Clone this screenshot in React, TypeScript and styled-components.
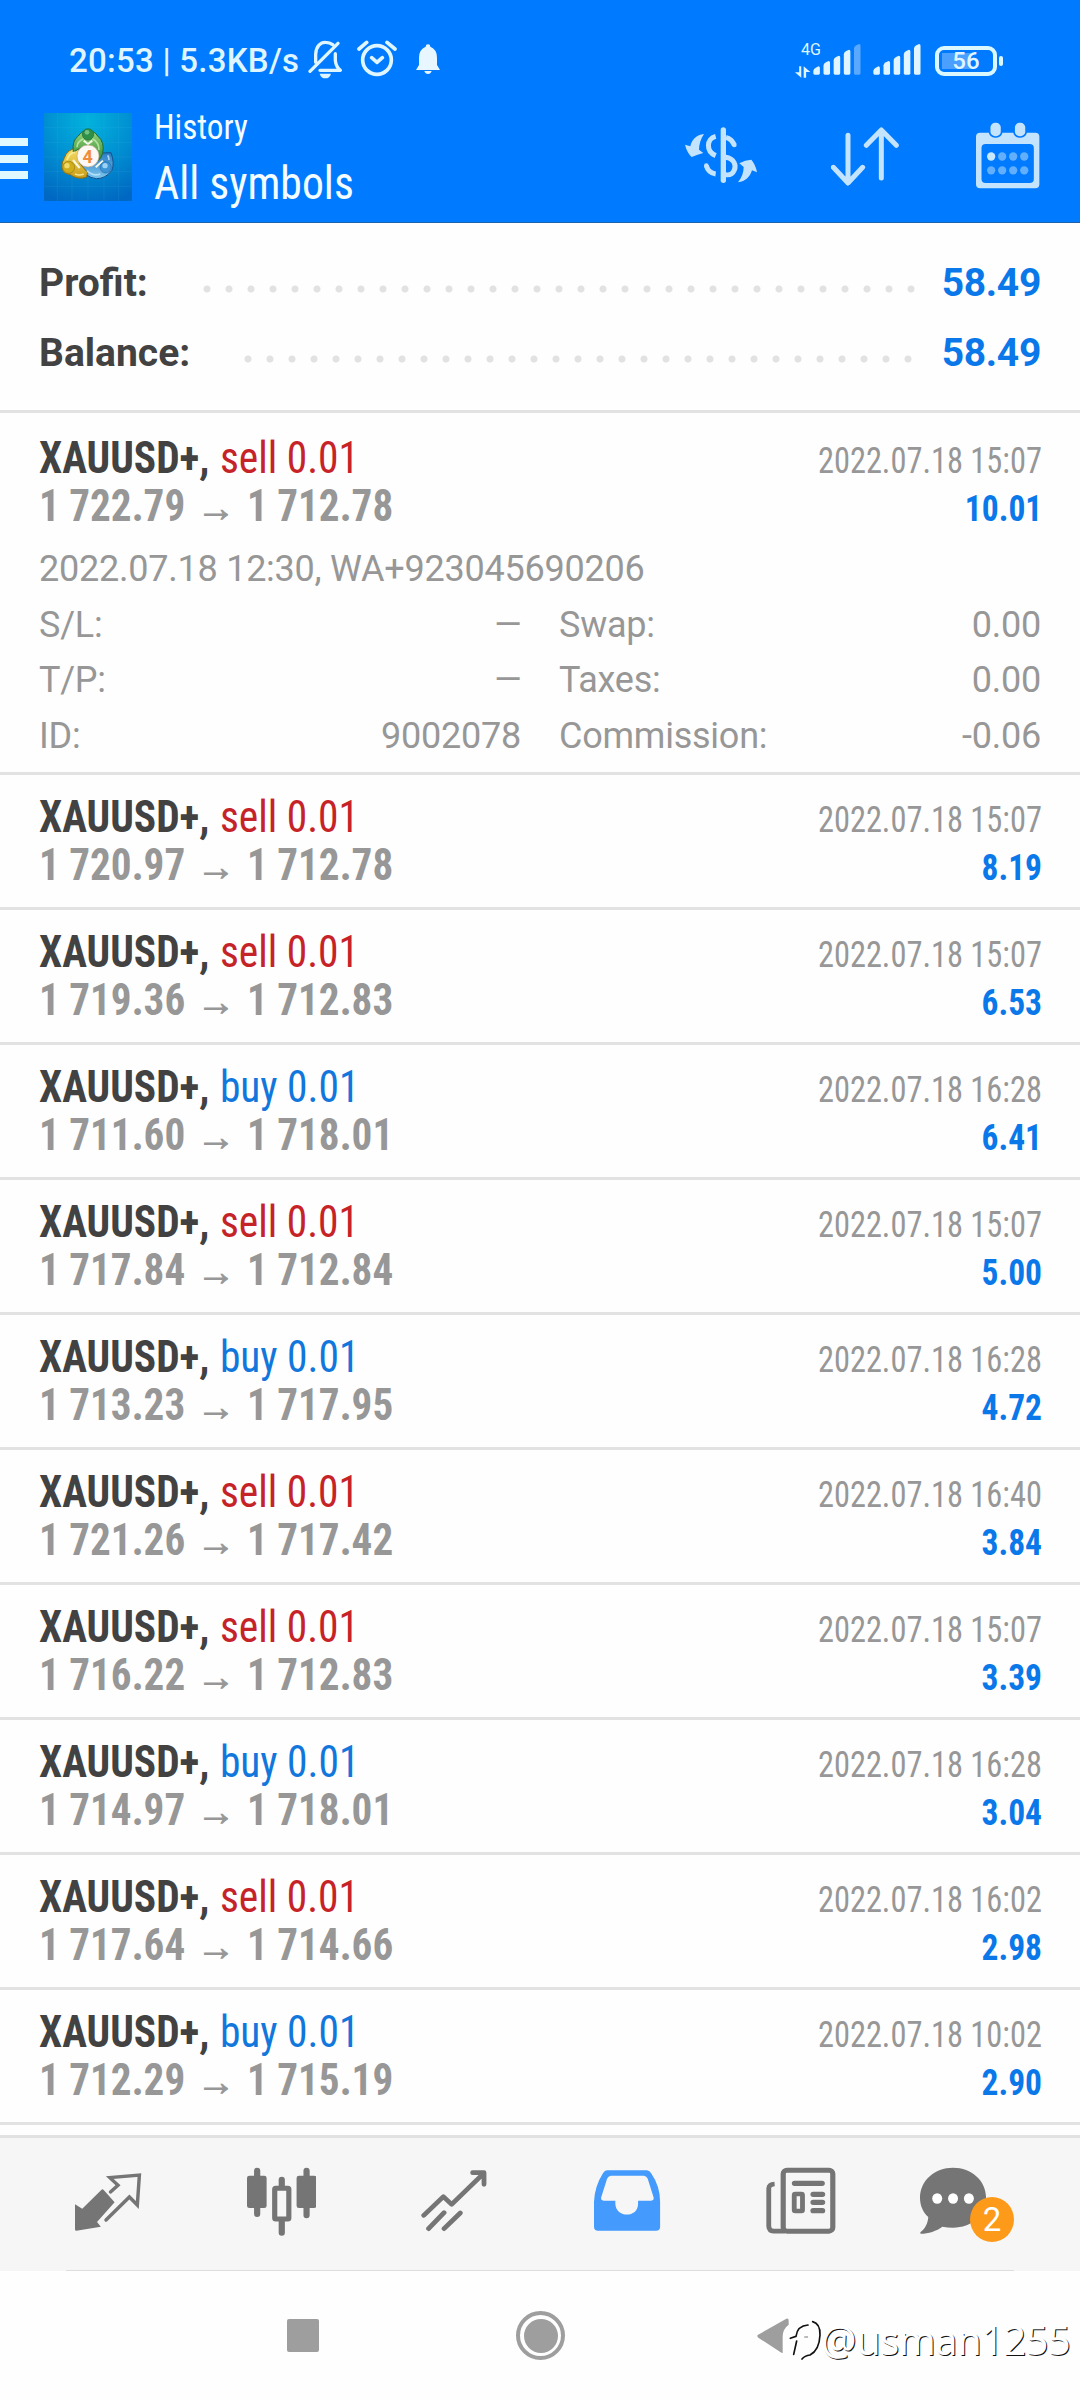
import React from "react";
import styled, { createGlobalStyle } from "styled-components";

const Global = createGlobalStyle`
  body { margin: 0; background: #fff; }
  * { box-sizing: border-box; }
`;

const ROBOTO = `Roboto, "Noto Sans", sans-serif`;
const CONDENSED = `"Roboto Condensed", Roboto, "Noto Sans", sans-serif`;
const SX = 2.904;
const SY = 3;

const Screen = styled.div`
  position: relative;
  width: 1080px;
  height: 2400px;
  overflow: hidden;
  display: flex;
  flex-direction: column;
  background: #fefefe;
  font-family: ${ROBOTO};
  white-space: nowrap;
`;

const Header = styled.header`
  height: 223px;
  background: #007bff;
  border-bottom: 1px solid #1c62ad;
  display: flex;
  flex-direction: column;
`;

const StatusBar = styled.div`
  height: 98px;
  padding: 23px 83px 0 69px;
  display: flex;
  align-items: center;
  color: #dff5ff;
`;

const Clock = styled.span`
  width: 239px;
  font-size: 33px;
  font-weight: 500;
  letter-spacing: 0.25px;
  line-height: 40px;
`;

const Spacer = styled.div`
  flex: 1;
`;

const Glyph = styled.svg<{ $gap?: number }>`
  display: block;
  flex: none;
  margin-left: ${(p) => p.$gap ?? 0}px;
`;

const DataType = styled.div`
  width: 18px;
  height: 34px;
  display: flex;
  flex-direction: column;
  justify-content: space-between;
  span {
    font-size: 16px;
    line-height: 12px;
    margin-left: 6px;
  }
`;

const Battery = styled.div`
  position: relative;
  width: 62px;
  height: 30px;
  margin-left: 14px;
  border: 4px solid #dcf8ff;
  border-radius: 9px;
  display: flex;
  align-items: center;
  justify-content: center;
  font-size: 24px;
  font-weight: 500;
  background: linear-gradient(#4a9fff, #4a9fff) 3px 3px / 29px 16px no-repeat;
  &::after {
    content: "";
    position: absolute;
    right: -10px;
    top: 6px;
    width: 4px;
    height: 10px;
    border-radius: 2px;
    background: #dcf8ff;
  }
`;

const TitleBar = styled.div`
  height: 124px;
  padding: 0 40px 6px 0;
  display: flex;
  align-items: center;
`;

const MenuButton = styled.div`
  width: 27.5px;
  height: 41px;
  margin-top: 3px;
  display: flex;
  flex-direction: column;
  justify-content: space-between;
  i {
    height: 8px;
    background: #e0f8ff;
  }
`;

const Titles = styled.div`
  margin: 6px 0 0 22px;
  display: flex;
  flex-direction: column;
  color: #f4fdff;
  font-family: ${CONDENSED};
`;

const Narrow = styled.span<{ $scale: number; $from?: "left" | "right" }>`
  display: inline-block;
  transform: scaleX(${(p) => p.$scale});
  transform-origin: ${(p) => p.$from ?? "left"} center;
`;

const Subtitle = styled(Narrow)`
  font-size: 35.5px;
  line-height: 46px;
`;

const Title = styled(Narrow)`
  font-size: 47px;
  line-height: 66px;
`;

const Summary = styled.section`
  height: 190px;
  padding: 25px 39px 0;
  border-bottom: 3px solid #e2e2e2;
`;

const SummaryRow = styled.div`
  height: 70px;
  display: flex;
  align-items: center;
  justify-content: space-between;
  font-size: 39px;
  line-height: 70px;
  font-weight: 700;
`;

const Label = styled.span`
  flex: 1;
  color: #424242;
`;

const Dots = styled.span<{ $n: number; $gap: number }>`
  width: ${(p) => p.$n * 22}px;
  margin: 12px ${(p) => p.$gap}px 0 0;
  height: 8px;
  background: radial-gradient(circle, #e2e2e2 3px, transparent 4px) 0 0 / 22px 8px repeat-x;
`;

const Amount = styled.span`
  width: 100px;
  text-align: right;
  letter-spacing: -0.3px;
  color: #0b78ea;
`;

const Order = styled.article<{ $open?: boolean }>`
  flex: none;
  padding: ${(p) => (p.$open ? "22px 38px 7px 39px" : "19px 38px 17px 39px")};
  height: ${(p) => (p.$open ? 362 : 135)}px;
  border-bottom: 3px solid #e2e2e2;
  font-family: ${CONDENSED};
`;

const Line = styled.div<{ $h: number }>`
  height: ${(p) => p.$h}px;
  display: flex;
  align-items: baseline;
  justify-content: space-between;
  line-height: 48px;
`;

const Instrument = styled(Narrow)`
  font-size: 43.5px;
  font-weight: 700;
  color: #424242;
`;

const Side = styled.span<{ $buy: boolean }>`
  font-weight: 400;
  margin-left: 1px;
  color: ${(p) => (p.$buy ? "#1277dc" : "#c62328")};
`;

const Prices = styled.span`
  display: flex;
  align-items: baseline;
  font-size: 44px;
  font-weight: 700;
  color: #979797;
`;

const Price = styled(Narrow)`
  width: 155px;
`;

const Arrow = styled.span`
  width: 53px;
  display: flex;
  justify-content: center;
  padding-right: 9px;
  font-family: "Liberation Sans", sans-serif;
  font-weight: 400;
  font-size: 39px;
  -webkit-text-stroke: 0.9px #979797;
`;

const Time = styled(Narrow)`
  font-size: 36px;
  color: #979797;
`;

const Profit = styled(Narrow)`
  font-size: 36px;
  font-weight: 700;
  color: #0b78ea;
`;

const Details = styled.div`
  margin-top: 12.4px;
  display: grid;
  grid-template-columns: 482px 482px;
  column-gap: 38px;
  font-family: ${ROBOTO};
  font-size: 36px;
  letter-spacing: -0.24px;
  line-height: 55.4px;
  color: #979797;
`;

const Wide = styled.div`
  grid-column: 1 / -1;
`;

const Field = styled.div`
  display: flex;
  justify-content: space-between;
`;

const Empty = styled(Narrow)`
  margin-right: -2px;
`;

const ListEnd = styled.div`
  height: 10px;
`;

const Tabs = styled.nav`
  height: 136px;
  flex: none;
  padding: 0 0 3px 75.4px;
  border-top: 3px solid #e2e2e2;
  background: #f6f6f6;
  display: flex;
  align-items: center;
`;

const Rule = styled.div`
  width: 948px;
  height: 1px;
  flex: none;
  margin: -1px 0 0 66px;
  background: #dedede;
`;

const Chat = styled.div`
  position: relative;
  margin-left: 84.3px;
`;

const Badge = styled.span`
  position: absolute;
  left: 50px;
  top: 34px;
  width: 44px;
  height: 45px;
  border-radius: 50%;
  background: #fe9a1a;
  color: #fff;
  font-size: 33px;
  line-height: 46px;
  text-align: center;
`;

const SystemBar = styled.footer`
  flex: 1;
  display: flex;
  align-items: center;
  padding-left: 286.5px;
`;

const Recent = styled.div`
  width: 32.5px;
  height: 32.5px;
  border-radius: 2px;
  background: #9e9e9e;
`;

const Home = styled.div`
  width: 49px;
  height: 49px;
  margin-left: 197px;
  border: 4px solid #9e9e9e;
  border-radius: 50%;
  background: #9e9e9e content-box;
  padding: 3.5px;
`;

const Watermark = styled.div`
  position: absolute;
  left: 788px;
  top: 2312px;
  display: flex;
  align-items: center;
  color: #fff;
  font-family: "Noto Sans", sans-serif;
  font-size: 39.5px;
  letter-spacing: -0.35px;
  line-height: 56px;
  text-shadow: 1px 1px 0.5px #111;
  span {
    margin-left: -3px;
  }
`;

const ICON = "#c4e3fd";

type PicProps = { x: number; y: number; w: number; h: number; sx?: number; gap?: number; children: React.ReactNode };

function Pic({ x, y, w, h, sx = SX, gap, children }: PicProps) {
  return (
    <Glyph $gap={gap} width={w / sx} height={h / SY} viewBox={`${x} ${y} ${w} ${h}`} preserveAspectRatio="none" fill="none">
      {children}
    </Glyph>
  );
}

function Bars({ x, faded, gap }: { x: number; faded?: boolean; gap: number }) {
  const tops = [200, 184, 168, 150, 133];
  return (
    <Pic x={x} y={100} w={140} h={163} gap={gap}>
      {tops.map((t, i) => {
        const l = x + 1 + i * 29.5;
        const dim = faded && i === 4;
        return (
          <path
            key={t}
            d={`M${l} 221V${t + 13}Q${l + 1} ${t + 7} ${l + 7} ${t + 4}L${l + 15} ${t}Q${l + 19} ${t} ${l + 19} ${t + 5}V221Q${l + 19} 225 ${l + 15} 225H${l + 4}Q${l} 225 ${l} 221Z`}
            fill={dim ? "#5aa8ff" : "#e0f5ff"}
          />
        );
      })}
    </Pic>
  );
}

function Logo() {
  return (
    <Glyph $gap={16.5} width="88" height="88" viewBox="43 39 264 264" fill="none">
      <defs>
        <radialGradient id="sky" cx="0.5" cy="0.1" r="0.95">
          <stop offset="0" stopColor="#02b2dd" />
          <stop offset="0.5" stopColor="#0090d2" />
          <stop offset="1" stopColor="#0068c2" />
        </radialGradient>
        <linearGradient id="green" x2="0" y2="1"><stop stopColor="#9ad67c" /><stop offset="1" stopColor="#2c8a33" /></linearGradient>
        <linearGradient id="gold" x2="0" y2="1"><stop stopColor="#f7e26a" /><stop offset="1" stopColor="#c99c16" /></linearGradient>
        <linearGradient id="blue" x2="0" y2="1"><stop stopColor="#2a7cc4" /><stop offset="1" stopColor="#7fc6ee" /></linearGradient>
      </defs>
      <rect x="43" y="39" width="264" height="264" fill="url(#sky)" />
      <path d="M83 39V303M127 39V303M175 39V303M223 39V303M267 39V303M43 83H307M43 127H307M43 171H307M43 215H307M43 259H307" stroke="#5cc8ee" strokeOpacity="0.16" strokeWidth="2" />
      <path d="M196 160L244 158Q256 190 246 212Q228 236 200 236Q166 232 150 200Z" fill="url(#blue)" stroke="#15508c" strokeWidth="3" />
      <path d="M148 142Q112 146 103 176Q92 196 100 212Q106 222 122 224Q144 240 170 232L174 218L150 190Z" fill="url(#gold)" stroke="#8a6c12" strokeWidth="3" />
      <path d="M131 156Q126 122 146 108Q156 92 175 92T204 108Q226 126 219 160Q214 176 204 184L186 150L160 140Z" fill="url(#green)" stroke="#24682f" strokeWidth="3" />
      <path d="M142 142Q142 124 162 116M188 116Q208 126 208 150" stroke="#c6ecb0" strokeWidth="5" strokeOpacity="0.8" />
      <path d="M112 180Q118 160 136 156M136 222Q150 228 162 222" stroke="#fdf3a8" strokeWidth="5" strokeOpacity="0.8" />
      <path d="M172 212Q190 230 212 222M238 180Q238 172 234 166" stroke="#c0e8fb" strokeWidth="5" strokeOpacity="0.8" />
      <path d="M130 180L150 204M198 202L220 182M162 122L175 132L188 122" stroke="#f3f8e6" strokeWidth="6" />
      <circle cx="175" cy="103" r="17" fill="#2f9148" stroke="#1e6a30" strokeWidth="2" />
      <circle cx="172" cy="97" r="7" fill="#8fd6a0" fillOpacity="0.7" />
      <circle cx="117" cy="202" r="18" fill="#cfae1e" stroke="#94780f" strokeWidth="2" />
      <circle cx="112" cy="197" r="8" fill="#f5e37c" fillOpacity="0.8" />
      <circle cx="228" cy="202" r="17" fill="#3c93d6" stroke="#2169a6" strokeWidth="2" />
      <circle cx="226" cy="197" r="8" fill="#b4e2fa" fillOpacity="0.8" />
      <circle cx="175" cy="168" r="33" fill="#fdf8f4" stroke="#b9a58a" strokeWidth="2" />
      <text x="174" y="188" textAnchor="middle" fontFamily="Roboto, sans-serif" fontWeight="700" fontSize="54" fill="#f08a3c">4</text>
    </Glyph>
  );
}

const orders: [string, string, string, string, string][] = [
  ["sell", "1 722.79", "1 712.78", "15:07", "10.01"],
  ["sell", "1 720.97", "1 712.78", "15:07", "8.19"],
  ["sell", "1 719.36", "1 712.83", "15:07", "6.53"],
  ["buy", "1 711.60", "1 718.01", "16:28", "6.41"],
  ["sell", "1 717.84", "1 712.84", "15:07", "5.00"],
  ["buy", "1 713.23", "1 717.95", "16:28", "4.72"],
  ["sell", "1 721.26", "1 717.42", "16:40", "3.84"],
  ["sell", "1 716.22", "1 712.83", "15:07", "3.39"],
  ["buy", "1 714.97", "1 718.01", "16:28", "3.04"],
  ["sell", "1 717.64", "1 714.66", "16:02", "2.98"],
  ["buy", "1 712.29", "1 715.19", "10:02", "2.90"],
];

const fields = [
  ["S/L:", "–", "Swap:", "0.00"],
  ["T/P:", "–", "Taxes:", "0.00"],
  ["ID:", "9002078", "Commission:", "-0.06"],
];

export default function App() {
  return (
    <Screen>
      <Global />
      <Header>
        <StatusBar>
          <Clock>20:53 | 5.3KB/s</Clock>
          <Pic x={54} y={10} w={103} h={163} sx={3}>
            <g stroke="#dff5ff" strokeWidth="10" strokeLinecap="round" strokeLinejoin="round">
              <path d="M60 125L144 41M77 98V74C78 50 92 37 107 38Q119 38 128 45M136 72V92Q138 112 151 122H90" />
            </g>
            <path d="M89 132H123Q119 146 106 146T89 132Z" fill="#dff5ff" />
          </Pic>
          <Pic x={200} y={10} w={120} h={163} sx={3} gap={14.3}>
            <g stroke="#dff5ff" strokeWidth="11" strokeLinecap="round" strokeLinejoin="round">
              <circle cx="260" cy="91" r="43" />
              <path d="M244 84L260 98L276 84M206 58L229 38M290 38L314 58" />
            </g>
          </Pic>
          <Pic x={378} y={10} w={72} h={163} sx={3} gap={19.5}>
            <path d="M407 51Q407 44 414 44T421 51Q441 59 441 84V106L450 121H378L387 106V84Q387 59 407 51ZM403 124H425Q422 133 414 133T403 124Z" fill="#e8f7ff" />
          </Pic>
          <Spacer />
          <DataType>
            <span>4G</span>
            <Glyph width={16} height={12} viewBox="740 188 46 36" preserveAspectRatio="none" fill="#dff5ff">
              <path d="M752 189H758V223L740 207H752ZM765 189L784 206H772V223H765Z" />
            </Glyph>
          </DataType>
          <Bars x={793} faded gap={0} />
          <Bars x={967} gap={11.7} />
          <Battery>56</Battery>
        </StatusBar>
        <TitleBar>
          <MenuButton><i /><i /><i /></MenuButton>
          <Logo />
          <Titles>
            <Subtitle $scale={0.935}>History</Subtitle>
            <Title $scale={0.93}>All symbols</Title>
          </Titles>
          <Spacer />
          <Pic x={48} y={36} w={216} h={210} sx={3}>
            <g stroke={ICON} strokeWidth="15">
              <path d="M140 79C112 86 110 124 140 137M140 192C124 190 116 182 112 167M171 82C186 86 190 94 196 105M170 142C196 146 202 166 196 180C190 194 182 196 170 194" />
              <path d="M163 60V211" strokeWidth="16" strokeLinecap="round" />
            </g>
            <circle cx="112" cy="167" r="7" fill={ICON} />
            <circle cx="196" cy="105" r="7" fill={ICON} />
            <path d="M105 72C95 86 90 104 90 119L103 129Q86 134 68 141Q54 128 48 104L64 109C68 90 82 74 105 72ZM207 217C219 202 224 186 224 171L211 160Q228 150 247 149Q260 164 264 187L249 181C242 202 230 214 207 217Z" fill={ICON} />
          </Pic>
          <Pic x={484} y={36} w={203} h={210} sx={3} gap={73.7}>
            <path d="M535 76V216M491 172L535 219L579 172M635 204V60M590 106L635 60L680 106" stroke={ICON} strokeWidth="15" strokeLinecap="round" strokeLinejoin="round" />
          </Pic>
          <Pic x={1268} y={366} w={185} h={210} gap={77.8}>
            <path fillRule="evenodd" fill={ICON} d="M1280 398H1440Q1452 398 1452 410V553Q1452 565 1440 565H1280Q1268 565 1268 553V410Q1268 398 1280 398ZM1296 432Q1284 432 1284 444V537Q1284 549 1296 549H1424Q1436 549 1436 537V444Q1436 432 1424 432Z" />
            {[1325, 1396].map((x) => (
              <rect key={x} x={x - 17.5} y="366" width="35" height="45" rx="16" fill={ICON} stroke="#007bff" strokeWidth="5" />
            ))}
            {[0, 1, 2, 3, 4, 5, 6, 7].map((i) => (
              <ellipse key={i} cx={1312 + (i % 4) * 32} cy={i < 4 ? 469.5 : 511} rx="12" ry="12.5" fill={i ? "#62b0fd" : "#c9e9ff"} />
            ))}
          </Pic>
        </TitleBar>
      </Header>

      <Summary>
        <SummaryRow>
          <Label>Profit:</Label>
          <Dots $n={33} $gap={19.4} />
          <Amount>58.49</Amount>
        </SummaryRow>
        <SummaryRow>
          <Label>Balance:</Label>
          <Dots $n={31} $gap={22.4} />
          <Amount>58.49</Amount>
        </SummaryRow>
      </Summary>

      {orders.map(([side, from, to, time, profit], i) => (
        <Order key={from} $open={i === 0}>
          <Line $h={47}>
            <Instrument $scale={0.952}>
              XAUUSD+, <Side $buy={side === "buy"}>{side} 0.01</Side>
            </Instrument>
            <Time $scale={0.9} $from="right">2022.07.18 {time}</Time>
          </Line>
          <Line $h={48}>
            <Prices>
              <Price $scale={0.935}>{from}</Price>
              <Arrow>→</Arrow>
              <Price $scale={0.935}>{to}</Price>
            </Prices>
            <Profit $scale={0.93} $from="right">{profit}</Profit>
          </Line>
          {i === 0 && (
            <Details>
              <Wide>2022.07.18 12:30, WA+923045690206</Wide>
              {fields.map(([a, b, c, d]) => (
                <React.Fragment key={a}>
                  <Field>
                    <span>{a}</span>
                    {b === "–" ? <Empty $scale={1.3} $from="right">{b}</Empty> : <span>{b}</span>}
                  </Field>
                  <Field><span>{c}</span><span>{d}</span></Field>
                </React.Fragment>
              ))}
            </Details>
          )}
        </Order>
      ))}
      <ListEnd />

      <Tabs>
        <Pic x={219} y={190} w={193} h={240}>
          <path d="M219 314L240 327L296 270Q300 267 305 274L334 308L283 367L294 381L223 393Q219 394 219 389Z" fill="#757575" />
          <path d="M322 277L344 257L320 234L406 226L400 316L377 292L309 361" stroke="#757575" strokeWidth="10" strokeLinejoin="miter" strokeLinecap="round" />
        </Pic>
        <Pic x={715} y={190} w={203} h={240} gap={104.7}>
          <g stroke="#757575" strokeWidth="18" strokeLinecap="round">
            <path d="M744.5 213V343M888 213V347M816 240V262M816 365V399" />
          </g>
          <rect x="715" y="228" width="57" height="97" rx="7" fill="#757575" />
          <rect x="859" y="228" width="58" height="97" rx="7" fill="#757575" />
          <rect x="795.5" y="266" width="41" height="92" rx="3" stroke="#757575" strokeWidth="15" fill="#f6f6f6" />
        </Pic>
        <Pic x={1223} y={190} w={192} h={240} gap={104.6}>
          <path d="M1231 347L1288 291L1312 314L1402 224M1373 219H1406V254M1245 387L1290 339M1290 387L1337 340" stroke="#757575" strokeWidth="14" strokeLinecap="round" strokeLinejoin="round" />
        </Pic>
        <Pic x={158} y={190} w={193} h={240} gap={107}>
          <path fillRule="evenodd" fill="#449bfd" d="M196 212H312Q320 213 324 221Q350 260 350 306V381Q350 393 338 393H170Q158 393 158 381V306Q160 260 184 221Q189 212 196 212ZM207 228Q199 229 196 237L179 293Q177 303 186 303H220V312C221 355 286 356 286 312V303H324Q333 303 331 293L314 237Q311 229 303 228Z" />
        </Pic>
        <Pic x={656} y={190} w={203} h={240} gap={105.2}>
          <g stroke="#757575" strokeWidth="15" strokeLinecap="round">
            <rect x="706" y="211.5" width="144" height="183" rx="11" />
            <path d="M681 253Q665 254 664 266V380Q665 394 678 394.500H712" strokeLinecap="butt" strokeWidth="14" />
            <path d="M739 251H819M793 284H820M793 308H820M793 333H820" strokeWidth="16" />
            <rect x="738" y="283" width="24" height="51" rx="3" strokeWidth="14" />
          </g>
        </Pic>
        <Chat>
          <Pic x={1103} y={190} w={273} h={240}>
            <path d="M1199 204C1253 204 1295 243 1295 295S1253 384 1199 384Q1182 384 1168 381C1152 394 1126 402 1106 402Q1102 401 1105 397C1119 386 1126 370 1127 352C1112 338 1103 318 1103 295C1103 243 1145 204 1199 204Z" fill="#757575" />
            {[1153, 1199, 1245].map((x) => <ellipse key={x} cx={x} cy="296.500" rx="14.500" ry="15.500" fill="#fff" />)}
          </Pic>
          <Badge>2</Badge>
        </Chat>
      </Tabs>
      <Rule />

      <SystemBar>
        <Recent />
        <Home />
        <Glyph $gap={192} width={32} height={36} viewBox="52 50 96 108" fill="#9e9e9e">
          <path d="M54 101L140 52Q147 49 147 58V70Q128 84 129 108V150Q131 158 123 153L56 109Q51 105 54 101Z" />
        </Glyph>
      </SystemBar>

      <Watermark>
        <Glyph width={36} height={42} viewBox="150 70 100 126" fill="none" strokeLinecap="round">
          <path d="M220 78Q243 84 242 118Q240 164 212 178Q196 180 188 190" stroke="#111" strokeWidth="5" />
          <path d="M153 128L170 122Q174 90 206 88M172 136L163 176" stroke="#111" strokeWidth="5" />
          <path d="M196 124H205" stroke="#777" strokeWidth="3" />
        </Glyph>
        <span>@usman1255</span>
      </Watermark>
    </Screen>
  );
}
